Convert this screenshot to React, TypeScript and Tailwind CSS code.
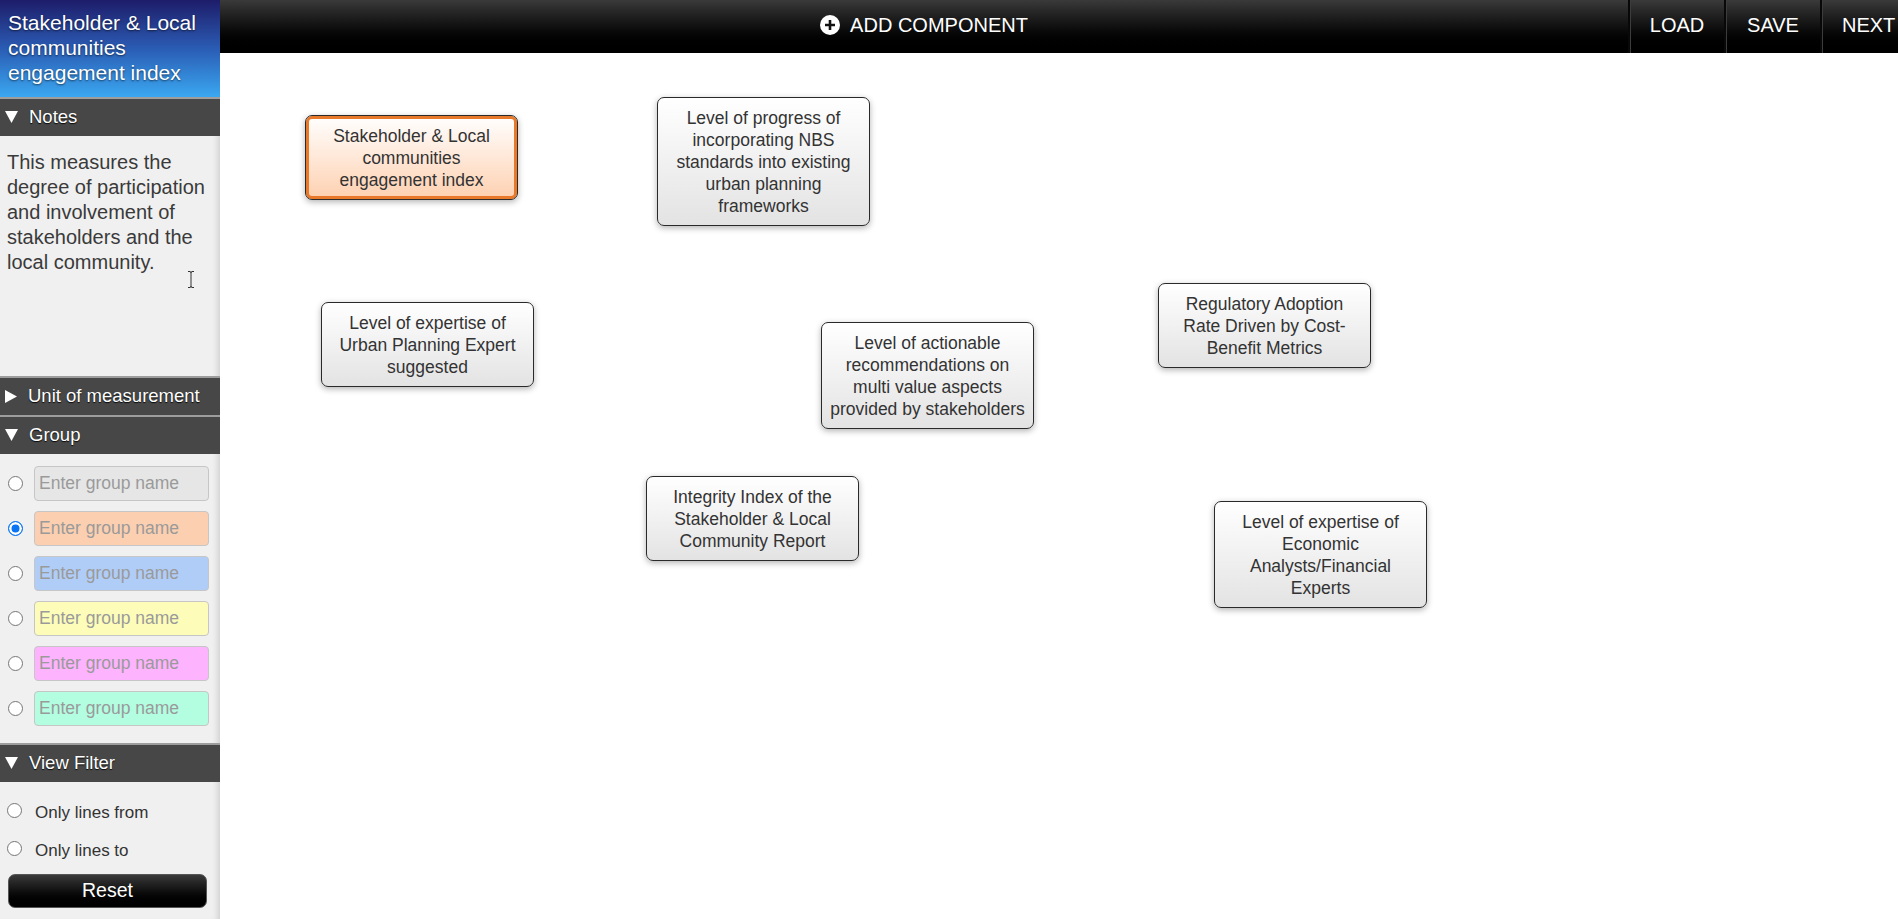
import React from "react";

const font = { fontFamily: '"Liberation Sans", Arial, sans-serif' };

function DownTri() {
  return (
    <svg width="13" height="12" viewBox="0 0 13 12" className="shrink-0">
      <polygon points="0,0 13,0 6.5,12" fill="#ffffff" />
    </svg>
  );
}
function RightTri() {
  return (
    <svg width="12" height="13" viewBox="0 0 12 13" className="shrink-0">
      <polygon points="0,0 12,6.5 0,13" fill="#ffffff" />
    </svg>
  );
}

function SectionHeader({ title, open }: { title: string; open: boolean }) {
  return (
    <div className="h-[39px] shrink-0 border-t-[2px] border-[#9d9d9d] bg-[#474747] flex items-center gap-[11px] pl-[5px] pb-[1px] text-white text-[18.5px] [text-shadow:0_1px_1px_rgba(0,0,0,0.9)]">
      {open ? <DownTri /> : <RightTri />}
      <span>{title}</span>
    </div>
  );
}

function Radio({ name, checked, className }: { name: string; checked?: boolean; className: string }) {
  return (
    <input
      type="radio"
      name={name}
      defaultChecked={checked}
      className={`appearance-none shrink-0 w-[15px] h-[15px] rounded-full border-[1.5px] border-[#767676] bg-white checked:border-[#0a74f5] checked:bg-[#0a74f5] checked:shadow-[inset_0_0_0_2.5px_#ffffff] ${className}`}
    />
  );
}

const groups = ["bg-[#e6e6e6]", "bg-[#fccfb0]", "bg-[#b0cdf7]", "bg-[#fdfdb9]", "bg-[#fdb3fd]", "bg-[#b3fde1]"];

type NodeDef = { left: number; top: number; lines: string[]; active?: boolean };
const nodes: NodeDef[] = [
  { left: 85, top: 62, lines: ["Stakeholder & Local", "communities", "engagement index"], active: true },
  { left: 437, top: 44, lines: ["Level of progress of", "incorporating NBS", "standards into existing", "urban planning", "frameworks"] },
  { left: 101, top: 249, lines: ["Level of expertise of", "Urban Planning Expert", "suggested"] },
  { left: 601, top: 269, lines: ["Level of actionable", "recommendations on", "multi value aspects", "provided by stakeholders"] },
  { left: 938, top: 230, lines: ["Regulatory Adoption", "Rate Driven by Cost-", "Benefit Metrics"] },
  { left: 426, top: 423, lines: ["Integrity Index of the", "Stakeholder & Local", "Community Report"] },
  { left: 994, top: 448, lines: ["Level of expertise of", "Economic", "Analysts/Financial", "Experts"] },
];

function Node({ n }: { n: NodeDef }) {
  const cls = n.active
    ? "absolute w-[213px] rounded-[7px] border border-[#2a2a2a] bg-gradient-to-b from-[#ffffff] to-[#fdd0b0] shadow-[inset_0_0_0_3px_#e8792b,0_2px_6px_rgba(0,0,0,0.3)] px-[8px] pt-[9px] pb-[8px] text-center text-[17.5px] leading-[22px] text-[#333333]"
    : "absolute w-[213px] rounded-[7px] border border-[#2a2a2a] bg-gradient-to-b from-[#ffffff] to-[#e3e3e3] shadow-[0_2px_6px_rgba(0,0,0,0.3)] px-[8px] pt-[9px] pb-[8px] text-center text-[17.5px] leading-[22px] text-[#333333]";
  return (
    <div className={cls} style={{ left: n.left, top: n.top }}>
      {n.lines.map((l, i) => (
        <div key={i} className="whitespace-nowrap">{l}</div>
      ))}
    </div>
  );
}

function HeaderButton({ label, last }: { label: string; last?: boolean }) {
  return (
    <div
      className={
        last
          ? "h-full w-[96px] -mr-[18px] shrink-0 border-l-[2px] border-[#080808] shadow-[inset_1px_0_0_#3c3c3c] flex items-center pl-[20px] pb-[3px] text-white text-[20px]"
          : "h-full w-[96px] shrink-0 border-l-[2px] border-[#080808] shadow-[inset_1px_0_0_#3c3c3c] flex items-center justify-center pb-[3px] text-white text-[20px]"
      }
    >
      {label}
    </div>
  );
}

export default function App() {
  return (
    <div className="flex h-[919px] w-full overflow-hidden bg-white" style={font}>
      {/* Sidebar */}
      <div className="w-[220px] shrink-0 flex flex-col bg-[#f0f0f0] shadow-[inset_-7px_0_6px_-5px_rgba(0,0,0,0.15)]">
        <div className="h-[97px] shrink-0 bg-gradient-to-b from-[#1d1c6a] via-[#2a5cb4] to-[#3ba8f1] px-[8px] pt-[10px] text-white text-[21px] leading-[25px] [text-shadow:0_1px_2px_rgba(0,0,0,0.6)]">
          Stakeholder &amp; Local communities engagement index
        </div>
        <SectionHeader title="Notes" open />
        <div className="relative h-[240px] shrink-0 pl-[7px] pr-[8px] pt-[14px] text-[20px] leading-[25px] text-[#3a3a3a]">
          This measures the degree of participation and involvement of stakeholders and the local community.
          <svg width="8" height="17" viewBox="0 0 8 17" className="absolute left-[187px] top-[135px]">
            <path d="M1 0.5 H3 Q4 0.5 4 2 V15 Q4 16.5 3 16.5 H1 M7 0.5 H5 Q4 0.5 4 2 M4 15 Q4 16.5 5 16.5 H7" stroke="#333" strokeWidth="1" fill="none" />
          </svg>
        </div>
        <SectionHeader title="Unit of measurement" open={false} />
        <SectionHeader title="Group" open />
        <div className="h-[289px] shrink-0 flex flex-col gap-[10px] pt-[12px]">
          {groups.map((g, i) => (
            <div key={i} className="flex items-center h-[35px]">
              <Radio name="group" checked={i === 1} className="ml-[8px] mr-[11px]" />
              <input
                type="text"
                placeholder="Enter group name"
                className={`w-[175px] h-[35px] rounded-[4px] border border-[#c6c6c6] ${g} px-[4px] text-[17.5px] text-[#333] placeholder:text-[#9a9a9a] outline-none`}
              />
            </div>
          ))}
        </div>
        <SectionHeader title="View Filter" open />
        <div className="flex flex-col pt-[20px] text-[17px] text-[#333]">
          <label className="flex items-center h-[22px]">
            <Radio name="filter" className="ml-[7px] mr-[13px] -mt-[5px]" />
            <span>Only lines from</span>
          </label>
          <label className="flex items-center h-[22px] mt-[16px]">
            <Radio name="filter" className="ml-[7px] mr-[13px] -mt-[5px]" />
            <span>Only lines to</span>
          </label>
          <button className="mt-[12px] ml-[8px] w-[199px] h-[34px] rounded-[7px] border border-[#555] bg-gradient-to-b from-[#3a3a3a] to-[#000000] text-white text-[19.5px] leading-none">
            Reset
          </button>
        </div>
      </div>

      {/* Main */}
      <div className="flex-1 flex flex-col min-w-0">
        <div className="h-[53px] shrink-0 flex items-stretch overflow-hidden bg-gradient-to-b from-[#3a3a3a] to-[#000000]">
          <div className="flex-1 flex items-center justify-center gap-[10px] pb-[3px] text-white text-[20px]">
            <svg width="20" height="20" viewBox="0 0 20 20">
              <circle cx="10" cy="10" r="10" fill="#ffffff" />
              <path d="M10 5 V15 M5 10 H15" stroke="#111111" strokeWidth="2.6" />
            </svg>
            <span>ADD COMPONENT</span>
          </div>
          <HeaderButton label="LOAD" />
          <HeaderButton label="SAVE" />
          <HeaderButton label="NEXT" last />
        </div>
        <div className="relative flex-1 bg-white">
          {nodes.map((n, i) => (
            <Node key={i} n={n} />
          ))}
        </div>
      </div>
    </div>
  );
}
